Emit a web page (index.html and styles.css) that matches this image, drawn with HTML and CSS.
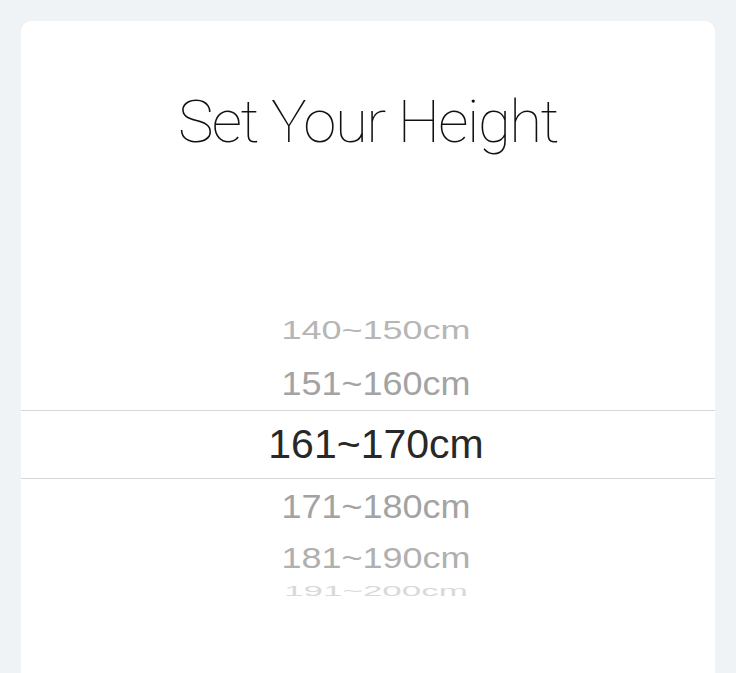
FILE: index.html
```html
<!DOCTYPE html>
<html lang="en">
<head>
    <meta charset="UTF-8">
    <meta name="viewport" content="width=device-width, initial-scale=1.0">
    <title>Set Your Height</title>
    <link rel="stylesheet" href="styles.css">
</head>
<body>
    <main class="card">
        <h1 class="title">Set Your Height</h1>
        <div class="picker">
            <div class="row far">
                <span class="label">140~150cm</span>
            </div>
            <div class="row near">
                <span class="label">151~160cm</span>
            </div>
            <div class="row selected">
                <span class="label">161~170cm</span>
            </div>
            <div class="row near below">
                <span class="label">171~180cm</span>
            </div>
            <div class="row far below">
                <span class="label">181~190cm</span>
            </div>
            <div class="row edge">
                <span class="label">191~200cm</span>
            </div>
        </div>
    </main>
</body>
</html>
```

FILE: styles.css
```css
body {
    margin: 0;
    background-color: #eff3f6;
    font-family: "Liberation Sans", Arial, sans-serif;
    height: 100vh;
    overflow: hidden;
}
.card {
    margin: 21px 21px 0 21px;
    background-color: #ffffff;
    border-radius: 10px 10px 0 0;
    height: calc(100vh - 21px);
    display: flex;
    flex-direction: column;
}
.title {
    margin: 0;
    padding-top: 61px;
    height: 80px;
    text-align: center;
    font-family: Roboto, "Liberation Sans", sans-serif;
    font-weight: 100;
    font-size: 60px;
    letter-spacing: -1.5px;
    line-height: 80px;
    color: #111111;
}
.picker {
    margin-top: 143px;
    padding-left: 16px;
    display: flex;
    flex-direction: column;
}
.row {
    display: flex;
    justify-content: center;
    align-items: center;
    font-size: 36px;
    line-height: 1;
    color: #a3a3a3;
}
.row .label {
    display: inline-block;
}
.row.far {
    height: 52px;
    color: #b6b6b6;
}
.row.far .label {
    transform: scaleY(0.7);
}
.row.near {
    height: 53px;
}
.row.near .label {
    transform: scaleY(0.92);
}
.row.near.below {
    height: 56px;
}
.row.far.below {
    height: 45px;
    color: #b0b0b0;
}
.row.far.below .label {
    transform: scaleY(0.8);
}
.row.selected {
    height: 67px;
    margin-left: -16px;
    padding-left: 16px;
    border-top: 1px solid #d6d6d6;
    border-bottom: 1px solid #d6d6d6;
    font-size: 41px;
    color: #282828;
}
.row.edge {
    height: 20px;
    color: #d9d9d9;
    font-size: 35px;
}
.row.edge .label {
    transform: scaleY(0.4);
}
```
